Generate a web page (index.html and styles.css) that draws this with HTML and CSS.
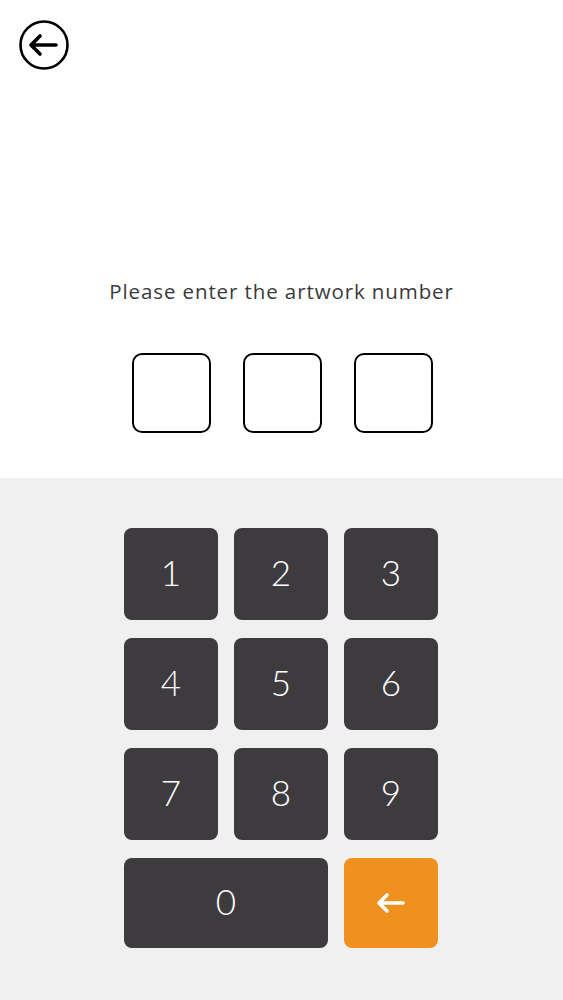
FILE: index.html
```
<!DOCTYPE HTML>
<html>

<head>
    <link rel="stylesheet" href="styles.css">
</head>

<body>
    <div class='top'>
        <button class='back'>
            <svg width='50' height='50' viewBox='0 0 50 50'>
                <circle cx='25' cy='25' r='23.5' fill='none' stroke='#000' stroke-width='2.6' />
                <path d='M12 25 H37 M21 16 L12 25 L21 34' fill='none' stroke='#000' stroke-width='3.6'
                    stroke-linecap='round' stroke-linejoin='round' />
            </svg>
        </button>
        <p class='prompt'>Please enter the artwork number</p>
        <div class='slots'>
            <div class='slot'></div>
            <div class='slot'></div>
            <div class='slot'></div>
        </div>
    </div>

    <div class='pad'>
        <div class='keys'>
            <button class='key'>1</button>
            <button class='key'>2</button>
            <button class='key'>3</button>
            <button class='key'>4</button>
            <button class='key'>5</button>
            <button class='key'>6</button>
            <button class='key'>7</button>
            <button class='key'>8</button>
            <button class='key'>9</button>
            <button class='key zero'>0</button>
            <button class='key del'>
                <svg width='30' height='22' viewBox='0 0 30 22'>
                    <path d='M3 11 H27 M11 3 L3 11 L11 19' fill='none' stroke='#fff' stroke-width='3.6'
                        stroke-linecap='round' stroke-linejoin='round' />
                </svg>
            </button>
        </div>
    </div>
</body>

</html>
```

FILE: styles.css
```
body {
    margin: 0;
    font-family: "Open Sans", Lato, sans-serif;
    background: #fff;
}

.top {
    height: 478px;
    display: flex;
    flex-direction: column;
}

.back {
    margin: 20px 0 0 19px;
    padding: 0;
    width: 50px;
    height: 50px;
    border: none;
    background: none;
}

.back svg {
    display: block;
}

.prompt {
    margin: 208px 0 0;
    text-align: center;
    font-size: 20.5px;
    line-height: 26px;
    letter-spacing: 0.9px;
    color: #3a3a3a;
}

.slots {
    margin-top: 49px;
    display: flex;
    justify-content: center;
    gap: 32px;
    padding-left: 2px;
}

.slot {
    width: 75px;
    height: 76px;
    border: 2.5px solid #000;
    border-radius: 10px;
}

.pad {
    background: #f1f0f1;
    height: 522px;
    padding-top: 50px;
    box-sizing: border-box;
}

.keys {
    width: 315px;
    margin: 0 auto;
    display: grid;
    grid-template-columns: repeat(3, 94px);
    grid-auto-rows: 92px;
    column-gap: 16px;
    row-gap: 18px;
}

.key {
    border: none;
    border-radius: 8px;
    background: #3e3b3f;
    color: #fff;
    font-family: Lato, "Open Sans", sans-serif;
    font-weight: 300;
    font-size: 35px;
    line-height: 1;
    padding: 0 0 4px;
}

.zero {
    grid-column: span 2;
    height: 90px;
}

.del {
    background: #f0901f;
    height: 90px;
    display: flex;
    align-items: center;
    justify-content: center;
    padding: 0;
}
```
